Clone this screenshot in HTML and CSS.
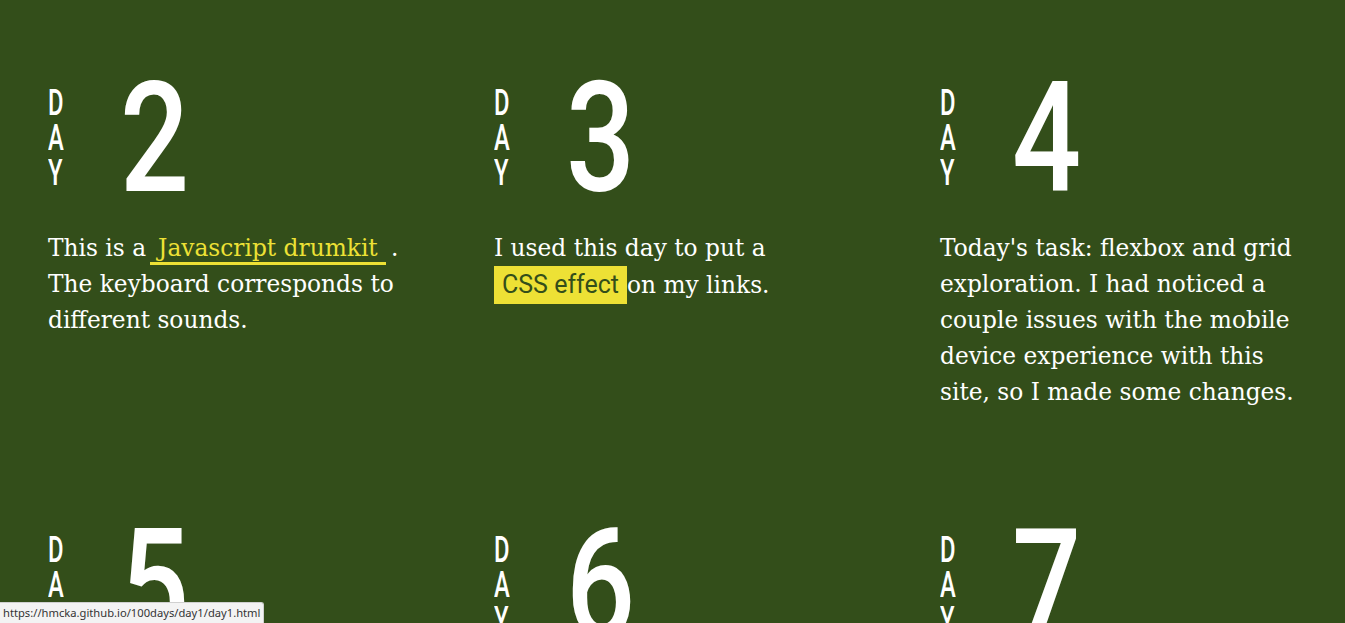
FILE: index.html
```html
<!DOCTYPE html>
<html lang="en">
<head>
<meta charset="utf-8">
<title>100 Days</title>
<link rel="stylesheet" href="styles.css">
</head>
<body>
<main class="grid">
  <section class="card">
    <div class="head">
      <div class="day"><span>D</span><span>A</span><span>Y</span></div>
      <div class="num">2</div>
    </div>
    <p class="text">This is a<a class="link-under" href="#">Javascript drumkit</a> . The keyboard corresponds to different sounds.</p>
  </section>
  <section class="card">
    <div class="head">
      <div class="day"><span>D</span><span>A</span><span>Y</span></div>
      <div class="num">3</div>
    </div>
    <p class="text">I used this day to put a <a class="link-fill" href="#">CSS effect</a>on my links.</p>
  </section>
  <section class="card">
    <div class="head">
      <div class="day"><span>D</span><span>A</span><span>Y</span></div>
      <div class="num">4</div>
    </div>
    <p class="text">Today's task: flexbox and grid exploration. I had noticed a couple issues with the mobile device experience with this site, so I made some changes.</p>
  </section>
  <section class="card">
    <div class="head">
      <div class="day"><span>D</span><span>A</span><span>Y</span></div>
      <div class="num">5</div>
    </div>
  </section>
  <section class="card">
    <div class="head">
      <div class="day"><span>D</span><span>A</span><span>Y</span></div>
      <div class="num">6</div>
    </div>
  </section>
  <section class="card">
    <div class="head">
      <div class="day"><span>D</span><span>A</span><span>Y</span></div>
      <div class="num">7</div>
    </div>
  </section>
</main>
<div class="status">https://hmcka.github.io/100days/day1/day1.html</div>
</body>
</html>
```
FILE: styles.css
```css
html, body {
  margin: 0;
  padding: 0;
  background: #334e1a;
  height: 100%;
  overflow: hidden;
}
body {
  font-family: "DejaVu Serif", serif;
  color: #ffffff;
}
.grid {
  display: grid;
  grid-template-columns: repeat(3, 380px);
  column-gap: 66px;
  row-gap: 0;
  padding: 70px 0 0 48px;
}
.card {
  display: flex;
  flex-direction: column;
  min-height: 447px;
}
.head {
  display: flex;
  align-items: center;
  gap: 55px;
  height: 130px;
}
.day {
  display: flex;
  flex-direction: column;
  font-family: Roboto, sans-serif;
  font-weight: 500;
  font-size: 36px;
  line-height: 35px;
  width: 17px;
  padding-top: 6px;
}
.day span {
  display: block;
  transform: scaleX(0.66);
  transform-origin: left center;
}
.num {
  font-family: Roboto, sans-serif;
  font-weight: 500;
  font-size: 154px;
  line-height: 1;
  transform: scaleX(0.79);
  transform-origin: left center;
  padding-top: 8px;
}
.text {
  margin: 30px 0 0;
  font-size: 23.3px;
  line-height: 36px;
}
.link-under {
  color: #ede135;
  text-decoration: none;
  margin-left: 4px;
  margin-right: -2px;
  padding: 0 8px 1px;
  border-bottom: 3px solid #ede135;
}
.link-fill {
  display: inline-block;
  color: #334e1a;
  background: #ede135;
  text-decoration: none;
  padding: 0 8px;
  font-family: Roboto, sans-serif;
  font-size: 25px;
  line-height: 38px;
}
.status {
  position: fixed;
  left: 0;
  bottom: 0;
  height: 20px;
  padding: 0 3px;
  background: #f3f3f3;
  border: 1px solid #d0d0d0;
  border-left: 0;
  border-bottom: 0;
  border-radius: 0 3px 0 0;
  font-family: "Noto Sans", sans-serif;
  font-size: 11.2px;
  line-height: 20px;
  color: #333;
}
```
